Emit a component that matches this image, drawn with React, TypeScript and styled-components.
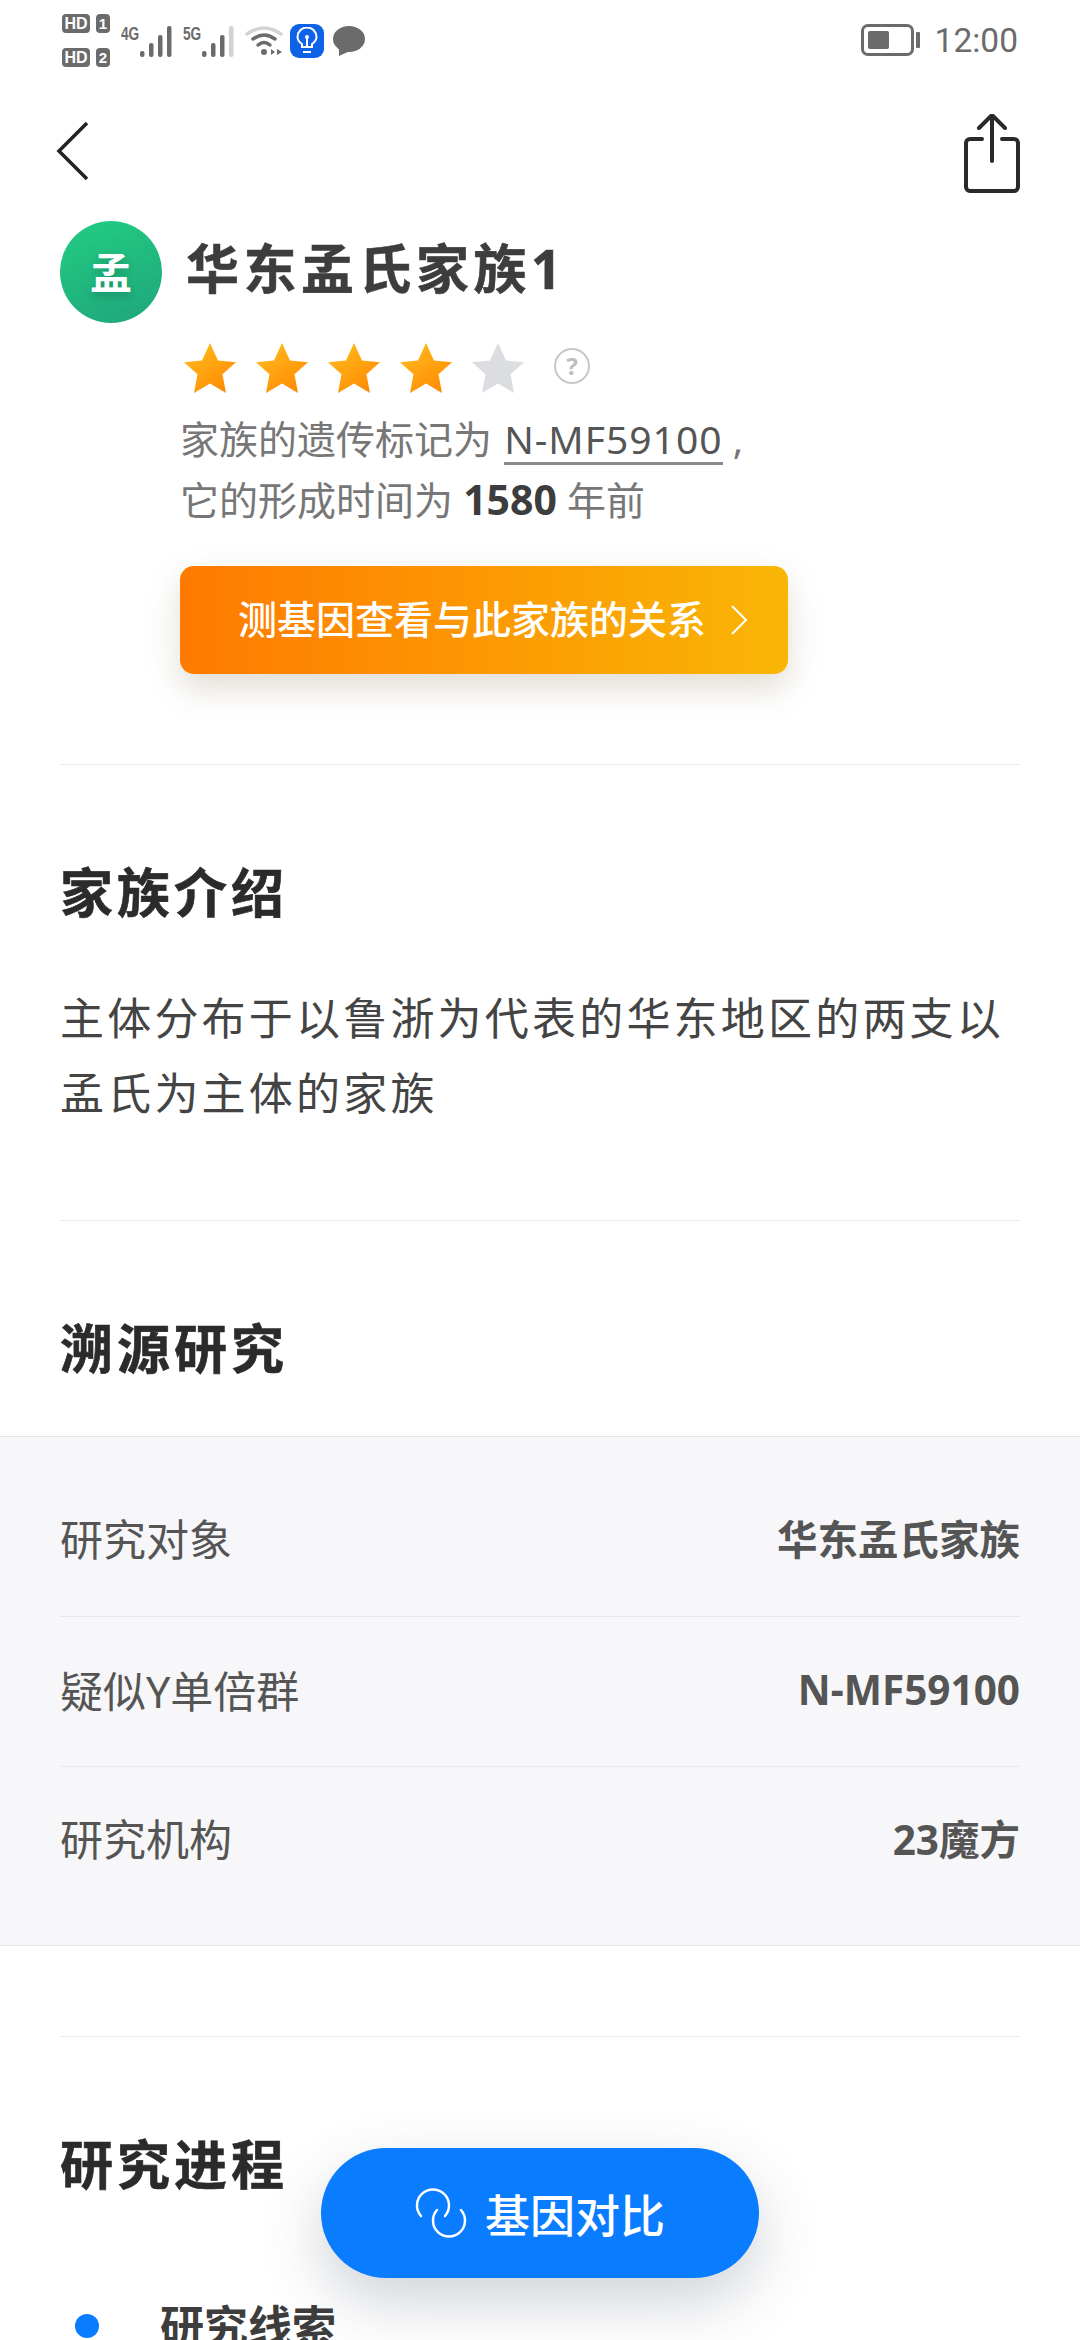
import styled, { createGlobalStyle } from 'styled-components';

const FONT = `'Noto Sans', 'Noto Sans CJK SC', sans-serif`;

const GlobalStyle = createGlobalStyle`
  html, body {
    margin: 0;
    padding: 0;
    background: #ffffff;
  }
  * {
    box-sizing: border-box;
  }
`;

const researchRows = [
  { label: '研究对象', value: '华东孟氏家族' },
  { label: '疑似Y单倍群', value: 'N-MF59100' },
  { label: '研究机构', value: '23魔方' },
];

const Star = ({ on, id }: { on: boolean; id: string }) => (
  <svg width='52' height='50' viewBox='0 0 52 50'>
    <defs>
      <linearGradient id={id} x1='0.2' y1='0' x2='0.9' y2='1'>
        <stop offset='0' stopColor='#ffbb1e' />
        <stop offset='1' stopColor='#ff8700' />
      </linearGradient>
    </defs>
    <path
      d='M26 0l8 17.500 18 1.800-13.500 12L42 50l-16-9.500L10 50l3.500-18.700L0 19.300l18-1.800z'
      fill={on ? `url(#${id})` : '#dcdde1'}
    />
  </svg>
);

const SignalBars = ({ last }: { last: string }) => (
  <svg width='32' height='31' viewBox='0 0 32 31'>
    <rect x='0' y='25' width='4.500' height='6' rx='2' fill='#6b6b6b' />
    <rect x='9' y='17' width='4.500' height='14' rx='2' fill='#6b6b6b' />
    <rect x='18' y='9' width='4.500' height='22' rx='2' fill='#6b6b6b' />
    <rect x='27' y='0' width='4.500' height='31' rx='2' fill={last} />
  </svg>
);

const StatusIcons = () => (
  <StatusLeft>
    <HdColumn>
      <HdRow>
        <HdTag>HD</HdTag>
        <HdNum>1</HdNum>
      </HdRow>
      <HdRow>
        <HdTag>HD</HdTag>
        <HdNum>2</HdNum>
      </HdRow>
    </HdColumn>
    <IconRow>
      <NetGroup>
        <NetLabel>4G</NetLabel>
        <SignalBars last='#6b6b6b' />
      </NetGroup>
      <NetGroup>
        <NetLabel>5G</NetLabel>
        <SignalBars last='#d2d2d2' />
      </NetGroup>
      <svg width='38' height='32' viewBox='0 0 38 32'>
        <path d='M2 9Q19-3 36 9' fill='none' stroke='#d4d4d4' strokeWidth='3.500' strokeLinecap='round' />
        <path d='M8 14Q19 6 30 14' fill='none' stroke='#6b6b6b' strokeWidth='3.500' strokeLinecap='round' />
        <path d='M13 20Q19 15 25 20' fill='none' stroke='#6b6b6b' strokeWidth='3.500' strokeLinecap='round' />
        <circle cx='19' cy='27' r='3' fill='#6b6b6b' />
        <path d='M30 27l-4 3v-6zM32 24l5 3-5 3z' fill='#6b6b6b' />
      </svg>
      <BulbBadge>
        <svg width='24' height='28' viewBox='0 0 24 28' fill='none' stroke='#ffffff' strokeWidth='2'>
          <path d='M7 20v-3C4 15 2.500 12.500 2.500 10a9.500 9.500 0 0 1 19 0c0 2.500-1.500 5-4.500 7v3z' />
          <path d='M12 20v-9' />
          <circle cx='12' cy='10' r='2' fill='#ffffff' stroke='none' />
          <path d='M8 25h8' />
        </svg>
      </BulbBadge>
      <svg width='32' height='30' viewBox='0 0 32 30'>
        <ellipse cx='16' cy='13' rx='16' ry='13' fill='#6b6b6b' />
        <path d='M6 21l0 9 11-5z' fill='#6b6b6b' />
      </svg>
    </IconRow>
  </StatusLeft>
);

const App = () => (
  <Page>
    <GlobalStyle />
    <StatusBar>
      <StatusIcons />
      <StatusRight>
        <Battery>
          <BatteryFill />
        </Battery>
        <BatteryCap />
        <Clock>12:00</Clock>
      </StatusRight>
    </StatusBar>

    <NavBar>
      <BackIcon width='34' height='60' viewBox='0 0 34 60' fill='none' stroke='#222222' strokeWidth='3.500'>
        <path d='M31 2L3 30l28 28' />
      </BackIcon>
      <svg width='56' height='80' viewBox='0 0 56 80' fill='none' stroke='#2a2a2a' strokeWidth='4' strokeLinecap='round' strokeLinejoin='round'>
        <path d='M28 47V2M15 14L28 1l13 13' />
        <path d='M18 25H6a4 4 0 0 0-4 4v44a4 4 0 0 0 4 4h44a4 4 0 0 0 4-4V29a4 4 0 0 0-4-4H38' />
      </svg>
    </NavBar>

    <Hero>
      <Avatar>孟</Avatar>
      <HeroBody>
        <FamilyName>华东孟氏家族1</FamilyName>
        <Rating>
          {[0, 1, 2, 3, 4].map(i => (
            <Star key={i} id={`star-${i}`} on={i < 4} />
          ))}
          <HelpMark>?</HelpMark>
        </Rating>
        <Description>
          家族的遗传标记为 <Marker>N-MF59100</Marker> ,
        </Description>
        <Description>
          它的形成时间为 <strong>1580</strong> 年前
        </Description>
      </HeroBody>
    </Hero>
    <CtaWrapper>
      <CtaButton>
        <CtaLabel>测基因查看与此家族的关系</CtaLabel>
        <svg width='18' height='30' viewBox='0 0 18 30' fill='none' stroke='#ffffff' strokeWidth='2'>
          <path d='M2 1l14 14L2 29' />
        </svg>
      </CtaButton>
    </CtaWrapper>

    <Section $height={456}>
      <SectionTitle>家族介绍</SectionTitle>
      <Intro>主体分布于以鲁浙为代表的华东地区的两支以孟氏为主体的家族</Intro>
    </Section>

    <Section $height={216}>
      <SectionTitle>溯源研究</SectionTitle>
    </Section>

    <Panel>
      {researchRows.map(row => (
        <PanelRow key={row.label}>
          <RowLabel>{row.label}</RowLabel>
          <RowValue>{row.value}</RowValue>
        </PanelRow>
      ))}
    </Panel>

    <LastSection>
      <SectionTitle>研究进程</SectionTitle>
      <TimelineItem>
        <Dot />
        <TimelineTitle>研究线索</TimelineTitle>
      </TimelineItem>
    </LastSection>

    <FloatButton>
      <svg width='52' height='52' viewBox='0 0 52 52' fill='none' stroke='#ffffff' strokeWidth='2.500' strokeLinecap='round'>
        <path d='M6 29A16 16 0 1 1 30 29' />
        <path d='M46 23A16 16 0 1 1 22 23' />
      </svg>
      基因对比
    </FloatButton>
  </Page>
);

const Page = styled.div`
  position: relative;
  width: 1080px;
  height: 2340px;
  overflow: hidden;
  background: #ffffff;
  font-family: ${FONT};
`;

const StatusBar = styled.div`
  height: 84px;
  padding: 14px 62px 0 62px;
  display: flex;
  justify-content: space-between;
  align-items: flex-start;
`;

const StatusLeft = styled.div`
  display: flex;
  align-items: flex-start;
  gap: 11px;
`;

const IconRow = styled.div`
  margin-top: 10px;
  height: 34px;
  display: flex;
  align-items: center;
  gap: 9px;
`;

const HdColumn = styled.div`
  display: flex;
  flex-direction: column;
  gap: 15px;
`;

const HdRow = styled.div`
  display: flex;
  gap: 6px;
`;

const HdTag = styled.span`
  width: 28px;
  height: 19px;
  border-radius: 4px;
  background: #6b6b6b;
  color: #ffffff;
  text-align: center;
  font: 700 16px/19px 'Liberation Sans', sans-serif;
`;

const HdNum = styled(HdTag)`
  width: 14px;
  font-size: 15px;
`;

const NetGroup = styled.div`
  position: relative;
  width: 51px;
  height: 31px;
  margin-right: 2px;
  display: flex;
  justify-content: flex-end;
`;

const NetLabel = styled.span`
  position: absolute;
  left: 0;
  top: -2px;
  color: #6b6b6b;
  font: 700 19px/20px 'Liberation Sans', sans-serif;
  transform: scaleX(0.72);
  transform-origin: left center;
`;

const BulbBadge = styled.div`
  width: 34px;
  height: 34px;
  margin-left: -2px;
  border-radius: 9px;
  background: #0d62e8;
  display: flex;
  align-items: center;
  justify-content: center;
`;

const StatusRight = styled.div`
  display: flex;
  align-items: center;
  height: 52px;
`;

const Battery = styled.div`
  width: 53px;
  height: 32px;
  border: 3px solid #6b6b6b;
  border-radius: 7px;
  padding: 4px;
`;

const BatteryFill = styled.div`
  width: 21px;
  height: 100%;
  border-radius: 2px;
  background: #6b6b6b;
`;

const BatteryCap = styled.div`
  width: 4px;
  height: 16px;
  margin-left: 2px;
  border-radius: 1px;
  background: #6b6b6b;
`;

const Clock = styled.span`
  margin-left: 15px;
  color: #6b6b6b;
  font-size: 33.500px;
  font-weight: 400;
  font-family: 'Roboto', sans-serif;
`;

const NavBar = styled.div`
  height: 136px;
  padding: 30px 60px 0 56px;
  display: flex;
  justify-content: space-between;
  align-items: flex-start;
`;

const BackIcon = styled.svg`
  margin-top: 7px;
`;

const Hero = styled.div`
  padding: 0 60px;
  display: flex;
  align-items: flex-start;
  gap: 20px;
`;

const Avatar = styled.div`
  flex: none;
  width: 102px;
  height: 102px;
  margin-top: 1px;
  padding-bottom: 4px;
  border-radius: 50%;
  background: linear-gradient(160deg, #22cd82, #1fa57c);
  color: #ffffff;
  font-size: 42px;
  font-weight: 700;
  display: flex;
  align-items: center;
  justify-content: center;
  text-shadow: 0 4px 8px rgba(0, 0, 0, 0.18);
`;

const HeroBody = styled.div`
  flex: 1;
  min-width: 0;
  margin-left: -2px;
`;

const FamilyName = styled.div`
  height: 100px;
  padding-left: 6px;
  color: #3d3d3d;
  font-size: 53px;
  line-height: 98px;
  font-weight: 700;
  letter-spacing: 4.500px;
  -webkit-text-stroke: 0.6px #3d3d3d;
`;

const Rating = styled.div`
  height: 89px;
  padding: 23px 0 0 4px;
  display: flex;
  align-items: flex-start;
  gap: 20px;
`;

const HelpMark = styled.span`
  width: 36px;
  height: 36px;
  margin: 5px 0 0 10px;
  border: 2px solid #c8c8c8;
  border-radius: 50%;
  color: #bdbdbd;
  font-size: 24px;
  line-height: 31px;
  font-weight: 700;
  text-align: center;
`;

const Description = styled.div`
  height: 60px;
  color: #777777;
  font-size: 39px;
  line-height: 60px;
  white-space: nowrap;

  strong {
    color: #3d3d3d;
    font-size: 41px;
    font-weight: 700;
  }
`;

const Marker = styled.span`
  display: inline-block;
  margin-left: 2px;
  color: #555555;
  line-height: 47px;
  letter-spacing: 1px;
  border-bottom: 3px solid #8a8a8a;
`;

const CtaWrapper = styled.div`
  padding: 37px 60px 90px 180px;
`;

const CtaButton = styled.div`
  width: 608px;
  height: 108px;
  padding: 0 40px 0 58px;
  border-radius: 14px;
  background: linear-gradient(90deg, #ff7a00, #f9b606);
  box-shadow: 0 14px 32px rgba(120, 100, 60, 0.22);
  color: #ffffff;
  font-size: 39px;
  font-weight: 500;
  display: flex;
  align-items: center;
  justify-content: space-between;
`;

const CtaLabel = styled.span`
  margin-bottom: 6px;
`;

const Section = styled.div<{ $height: number }>`
  height: ${p => p.$height}px;
  margin: 0 60px;
  border-top: 1px solid #e9e9e9;
  padding-top: 92px;
`;

const SectionTitle = styled.div`
  color: #2b2b2b;
  font-size: 53px;
  line-height: 72px;
  font-weight: 700;
  letter-spacing: 4px;
  -webkit-text-stroke: 0.6px #2b2b2b;
`;

const Intro = styled.div`
  margin-top: 52px;
  color: #444444;
  font-size: 44px;
  line-height: 75px;
  letter-spacing: 3.200px;
`;

const Panel = styled.div`
  height: 510px;
  padding: 0 60px;
  background: #f7f7f9;
  border-top: 1px solid #e3e4e6;
  border-bottom: 1px solid #e3e4e6;
`;

const PanelRow = styled.div`
  height: 150px;
  padding-bottom: 5px;
  display: flex;
  align-items: center;
  justify-content: space-between;
  border-bottom: 1px solid #e8e8ea;

  &:first-child {
    height: 180px;
    padding: 22px 0 0;
  }
  &:last-child {
    height: 178px;
    padding: 0 0 37px;
    border-bottom: 0;
  }
`;

const RowLabel = styled.span`
  color: #555555;
  font-size: 43px;
`;

const RowValue = styled.span`
  color: #555555;
  font-size: 40.500px;
  font-weight: 700;
`;

const LastSection = styled.div`
  margin: 90px 60px 0;
  border-top: 1px solid #e9e9e9;
  padding-top: 92px;
`;

const TimelineItem = styled.div`
  margin-top: 95px;
  display: flex;
  align-items: center;
`;

const Dot = styled.div`
  width: 24px;
  height: 24px;
  margin-left: 15px;
  border-radius: 50%;
  background: #0a7cff;
`;

const TimelineTitle = styled.div`
  margin-left: 61px;
  color: #3d3d3d;
  font-size: 44px;
  line-height: 60px;
  font-weight: 700;
`;

const FloatButton = styled.div`
  position: absolute;
  left: 321px;
  top: 2148px;
  width: 438px;
  height: 130px;
  border-radius: 65px;
  background: #0a7cff;
  box-shadow: 0 24px 60px rgba(60, 70, 90, 0.24);
  color: #ffffff;
  font-size: 45px;
  font-weight: 500;
  display: flex;
  align-items: center;
  justify-content: center;
  gap: 18px;
`;

export default App;
